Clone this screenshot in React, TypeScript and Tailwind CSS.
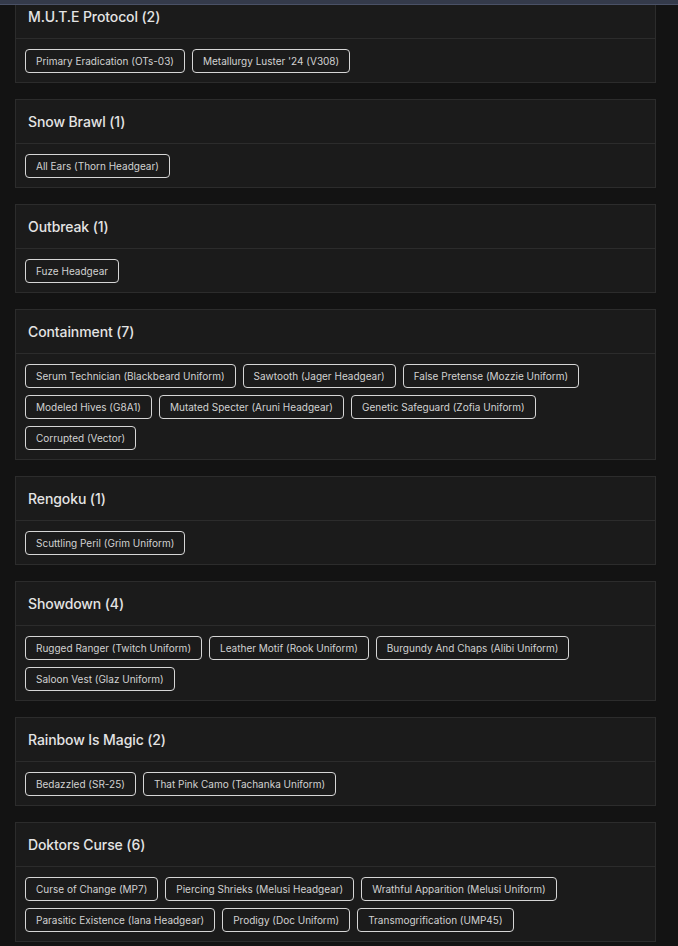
import React from "react";

const groups: { title: string; items: string[] }[] = [
  { title: "M.U.T.E Protocol (2)", items: ["Primary Eradication (OTs-03)", "Metallurgy Luster '24 (V308)"] },
  { title: "Snow Brawl (1)", items: ["All Ears (Thorn Headgear)"] },
  { title: "Outbreak (1)", items: ["Fuze Headgear"] },
  {
    title: "Containment (7)",
    items: [
      "Serum Technician (Blackbeard Uniform)",
      "Sawtooth (Jager Headgear)",
      "False Pretense (Mozzie Uniform)",
      "Modeled Hives (G8A1)",
      "Mutated Specter (Aruni Headgear)",
      "Genetic Safeguard (Zofia Uniform)",
      "Corrupted (Vector)",
    ],
  },
  { title: "Rengoku (1)", items: ["Scuttling Peril (Grim Uniform)"] },
  {
    title: "Showdown (4)",
    items: [
      "Rugged Ranger (Twitch Uniform)",
      "Leather Motif (Rook Uniform)",
      "Burgundy And Chaps (Alibi Uniform)",
      "Saloon Vest (Glaz Uniform)",
    ],
  },
  { title: "Rainbow Is Magic (2)", items: ["Bedazzled (SR-25)", "That Pink Camo (Tachanka Uniform)"] },
  {
    title: "Doktors Curse (6)",
    items: [
      "Curse of Change (MP7)",
      "Piercing Shrieks (Melusi Headgear)",
      "Wrathful Apparition (Melusi Uniform)",
      "Parasitic Existence (Iana Headgear)",
      "Prodigy (Doc Uniform)",
      "Transmogrification (UMP45)",
    ],
  },
];

export default function App() {
  return (
    <div
      className="min-h-[946px] w-[678px] bg-[#131313] overflow-hidden"
      style={{ fontFamily: "Inter, 'Noto Sans', sans-serif" }}
    >
      <div className="fixed top-0 left-0 right-0 h-[5px] bg-[#343a4a] border-b border-[#4a5166] z-10" />
      <div className="flex flex-col gap-[16px] w-[641px] ml-[15px] -mt-[6px] pb-[10px]">
        {groups.map((g) => (
          <div key={g.title} className="bg-[#1b1b1b] border border-[#2c2c2c]">
            <div className="h-[44px] border-b border-[#2c2c2c] flex items-center px-[12px]">
              <span className="text-[14px] font-medium text-[#e4e4e4] tracking-[-0.1px]">{g.title}</span>
            </div>
            <div className="flex flex-wrap gap-x-[7px] gap-y-[7px] pt-[10px] pb-[9px] px-[9px]">
              {g.items.map((it) => (
                <div
                  key={it}
                  className="h-[24px] flex items-center px-[10px] border border-[#d6d6d6] rounded-[4px] text-[10px] text-[#d2d2d2] whitespace-nowrap"
                >
                  {it}
                </div>
              ))}
            </div>
          </div>
        ))}
      </div>
    </div>
  );
}
